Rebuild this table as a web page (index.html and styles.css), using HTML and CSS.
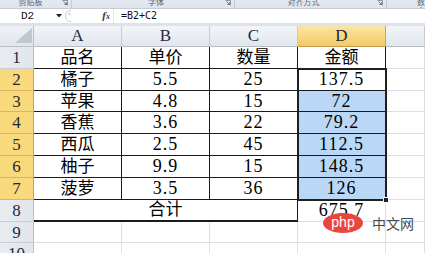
FILE: index.html
```html
<!DOCTYPE html>
<html lang="zh">
<head>
<meta charset="utf-8">
<title>Excel</title>
<link rel="stylesheet" href="styles.css">
</head>
<body>
<div class="ribbon">
  <div class="grp g1"><span class="lbl">剪贴板</span><svg class="launch" width="6" height="6" viewBox="0 0 6 6"><path d="M0.5 0.5H5.5V5.5" fill="none" stroke="#8a95a3"/><path d="M1.5 1.5L4.5 4.5M2.5 4.5H4.5V2.5" fill="none" stroke="#6c7885"/></svg></div>
  <div class="grp g2"><span class="lbl">字体</span><svg class="launch" width="6" height="6" viewBox="0 0 6 6"><path d="M0.5 0.5H5.5V5.5" fill="none" stroke="#8a95a3"/><path d="M1.5 1.5L4.5 4.5M2.5 4.5H4.5V2.5" fill="none" stroke="#6c7885"/></svg></div>
  <div class="grp g3"><span class="lbl">对齐方式</span><svg class="launch" width="6" height="6" viewBox="0 0 6 6"><path d="M0.5 0.5H5.5V5.5" fill="none" stroke="#8a95a3"/><path d="M1.5 1.5L4.5 4.5M2.5 4.5H4.5V2.5" fill="none" stroke="#6c7885"/></svg></div>
  <div class="grp g4"><span class="lbl">数字</span></div>
</div>
<div class="fbar">
  <div class="namebox"><span class="nm">D2</span><svg class="drop" width="6" height="4" viewBox="0 0 6 4"><path d="M0 0H6L3 3.5Z" fill="#222"/></svg></div>
  <div class="split"><svg width="10" height="14" viewBox="0 0 10 14"><path d="M7 1.5C3 1.5 1.5 4 1.5 7S3 12.5 7 12.5" fill="none" stroke="#c3c8cf"/><circle cx="5.5" cy="5" r="1.6" fill="#d9dde2"/></svg></div>
  <div class="fxwrap"><span class="fx">f<span class="fxx">x</span></span></div>
  <div class="finput">=B2+C2</div>
</div>
<div class="gap"></div>
<div class="sheet">
  <div class="corner"><svg width="34" height="20" viewBox="0 0 34 20"><polygon points="15,17 32,2 32,17" fill="#c2c7ce"/></svg></div>
  <div class="ch">A</div>
  <div class="ch">B</div>
  <div class="ch">C</div>
  <div class="ch hl">D</div>
  <div class="ch"></div>

  <div class="rh">1</div>
  <div class="c t">品名</div>
  <div class="c t">单价</div>
  <div class="c t">数量</div>
  <div class="c t">金额</div>
  <div class="c"></div>

  <div class="rh hl">2</div>
  <div class="c t">橘子</div>
  <div class="c t num">5.5</div>
  <div class="c t num">25</div>
  <div class="c t num active">137.5<div class="selection"><span class="handle"></span></div></div>
  <div class="c"></div>

  <div class="rh hl">3</div>
  <div class="c t">苹果</div>
  <div class="c t num">4.8</div>
  <div class="c t num">15</div>
  <div class="c t num blue">72</div>
  <div class="c"></div>

  <div class="rh hl">4</div>
  <div class="c t">香蕉</div>
  <div class="c t num">3.6</div>
  <div class="c t num">22</div>
  <div class="c t num blue">79.2</div>
  <div class="c"></div>

  <div class="rh hl">5</div>
  <div class="c t">西瓜</div>
  <div class="c t num">2.5</div>
  <div class="c t num">45</div>
  <div class="c t num blue">112.5</div>
  <div class="c"></div>

  <div class="rh hl">6</div>
  <div class="c t">柚子</div>
  <div class="c t num">9.9</div>
  <div class="c t num">15</div>
  <div class="c t num blue">148.5</div>
  <div class="c"></div>

  <div class="rh hl">7</div>
  <div class="c t">菠萝</div>
  <div class="c t num">3.5</div>
  <div class="c t num">36</div>
  <div class="c t num blue">126</div>
  <div class="c"></div>

  <div class="rh">8</div>
  <div class="c t total">合计</div>
  <div class="c num sum">675.7</div>
  <div class="c"></div>

  <div class="rh">9</div>
  <div class="c"></div>
  <div class="c"></div>
  <div class="c"></div>
  <div class="c"></div>
  <div class="c"></div>

  <div class="rh">10</div>
  <div class="c"></div>
  <div class="c"></div>
  <div class="c"></div>
  <div class="c"></div>
  <div class="c"></div>
</div>
<div class="watermark"><span class="php">php</span><span class="cn">中文网</span></div>
</body>
</html>
```
FILE: styles.css
```css
* { box-sizing: border-box; }
html, body { margin: 0; padding: 0; }
body {
  width: 425px;
  height: 253px;
  overflow: hidden;
  background: #fff;
  position: relative;
  font-family: "Liberation Serif", "Noto Sans CJK SC", serif;
}

/* ribbon group labels strip */
.ribbon {
  display: flex;
  height: 9px;
  background: linear-gradient(#e4e9f0, #dfe5ed);
  border-bottom: 1px solid #c4ccd6;
}
.grp {
  position: relative;
  height: 8px;
  overflow: hidden;
  display: flex;
  justify-content: center;
  border-right: 1px solid #c5cdd7;
}
.g1 { width: 72px; padding-right: 10px; }
.g2 { width: 163px; padding-left: 6px; }
.g3 { width: 152px; padding-right: 14px; }
.g4 { flex: 1; border-right: none; justify-content: flex-start; padding-left: 30px; }
.lbl {
  display: block;
  margin-top: -3px;
  font-family: "Noto Sans CJK SC", sans-serif;
  font-size: 8px;
  line-height: 9px;
  color: #5d6673;
}
.launch { position: absolute; right: 3px; top: 0; }

/* formula bar */
.fbar {
  display: flex;
  height: 14px;
  background: #fff;
}
.namebox {
  width: 64px;
  display: flex;
  align-items: center;
  padding-left: 21px;
  font-family: "Liberation Mono", monospace;
  font-size: 11px;
  color: #111;
}
.nm { line-height: 14px; }
.drop { margin-left: 22px; }
.split { width: 10px; display: flex; align-items: center; }
.fxwrap {
  width: 39px;
  display: flex;
  justify-content: flex-end;
  align-items: center;
  padding-right: 3px;
}
.fx {
  font-family: "Liberation Serif", serif;
  font-style: italic;
  font-weight: bold;
  font-size: 11px;
  line-height: 12px;
  color: #3a3a3a;
}
.fxx { font-size: 8px; }
.finput {
  flex: 1;
  padding-left: 7px;
  border-left: 1px solid #e2e6eb;
  font-family: "DejaVu Sans Mono", monospace;
  font-size: 10px;
  line-height: 14px;
  color: #111;
}
.gap {
  height: 3px;
  background: #dde3ea;
}

/* sheet grid */
.sheet {
  display: grid;
  grid-template-columns: 34px 88px 88px 88px 88px 1fr;
  grid-template-rows: 21px 22px 22px 21px 22px 22px 22px 22px 22px 21px 22px;
}
.corner {
  background: linear-gradient(#eef1f5, #e2e6ec);
  border-right: 1px solid #b9c1cb;
  border-bottom: 1px solid #b9c1cb;
}
.corner svg { display: block; }
.ch {
  background: linear-gradient(#f3f5f8, #e1e6ec);
  border-right: 1px solid #c4cbd4;
  border-bottom: 1px solid #b4bdc8;
  font-size: 17px;
  line-height: 20px;
  text-align: center;
  color: #1e2a38;
}
.ch.hl {
  background: linear-gradient(#fbe6a3, #f4c964);
  border-bottom-color: #c29a49;
  border-right-color: #c9a457;
}
.rh {
  background: linear-gradient(90deg, #e9ecf1, #e1e5eb);
  border-right: 1px solid #b9c1cb;
  border-bottom: 1px solid #c7ced7;
  font-size: 17px;
  line-height: 21px;
  text-align: center;
  color: #1e2a38;
  overflow: hidden;
}
.rh.hl {
  background: #f8d97c;
  border-bottom-color: #d9b461;
  border-right-color: #c9a457;
}
.c {
  border-right: 1px solid #dcdfe3;
  border-bottom: 1px solid #dcdfe3;
  text-align: center;
  font-size: 17px;
  line-height: 21px;
  color: #000;
  white-space: nowrap;
}
.c.t {
  border-right-color: #1a1a1a;
  border-bottom-color: #1a1a1a;
}
.num {
  font-size: 18px;
  letter-spacing: 1px;
}
.blue { background: #bad8f6; }
.total {
  grid-column: span 3;
  border-bottom: 2px solid #4a4a4a;
  line-height: 20px;
}
.sum {
  line-height: 21px;
}

.active { position: relative; }
.selection {
  position: absolute;
  left: -1px;
  top: -1px;
  width: 90px;
  height: 133px;
  border: 2px solid #1f1f1f;
  pointer-events: none;
  z-index: 2;
}
.handle {
  position: absolute;
  right: -4px;
  bottom: -4px;
  width: 6px;
  height: 6px;
  background: #222;
  border: 1px solid #fff;
}

/* watermark overlay */
.watermark {
  position: absolute;
  left: 323px;
  top: 213px;
  display: flex;
  align-items: center;
  gap: 9px;
  z-index: 3;
}
.php {
  width: 40px;
  height: 20px;
  border-radius: 50%;
  background: #e8463e;
  color: #fff;
  font-family: "Liberation Sans", sans-serif;
  font-size: 14px;
  line-height: 18px;
  text-align: center;
}
.cn {
  font-family: "Noto Sans CJK SC", sans-serif;
  font-size: 14px;
  line-height: 18px;
  color: #4a4a4a;
}
```
